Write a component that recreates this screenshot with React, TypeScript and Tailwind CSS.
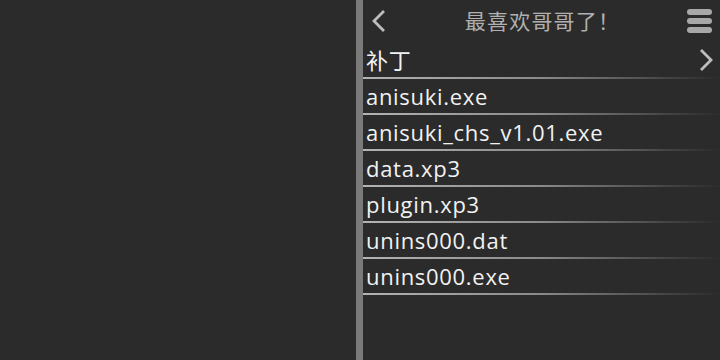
const files = [
  "anisuki.exe",
  "anisuki_chs_v1.01.exe",
  "data.xp3",
  "plugin.xp3",
  "unins000.dat",
  "unins000.exe",
];

const font = { fontFamily: '"Open Sans", "Noto Sans CJK SC", sans-serif' };

function Divider() {
  return <div className="h-[2px] bg-gradient-to-r from-[#b4b4b4] via-[#8a8a8a] to-[#2b2b2b]" />;
}

function Row({ label, arrow }: { label: string; arrow?: boolean }) {
  return (
    <div>
      <div className="flex h-[34px] items-center justify-between pl-[3px] pr-[5px] text-[22px] leading-none tracking-[0.7px] text-[#f2f2f2]">
        <span>{label}</span>
        {arrow && (
          <svg width="16" height="24" viewBox="0 0 16 24" fill="none" aria-hidden="true">
            <path d="M3 3l9 9-9 9" stroke="#bdbdbd" strokeWidth="2.8" strokeLinecap="square" />
          </svg>
        )}
      </div>
      <Divider />
    </div>
  );
}

export default function App() {
  return (
    <div className="flex h-[360px] w-[720px] bg-[#2b2b2b]" style={font}>
      {/* empty left pane */}
      <div className="w-[356px] shrink-0" />
      <div className="w-[7px] shrink-0 bg-[#7a7a7a]" />

      {/* file list pane */}
      <div className="flex min-w-0 flex-1 flex-col">
        <div className="flex h-[43px] items-center justify-between pl-[7px] pr-[8px] pb-[2px]">
          <svg width="16" height="24" viewBox="0 0 16 24" fill="none" aria-hidden="true">
            <path d="M13 3L4 12l9 9" stroke="#bdbdbd" strokeWidth="2.8" strokeLinecap="square" />
          </svg>
          <span
            className="pl-[12px] text-[21px] leading-none tracking-[1.2px] text-[#b0b0b0]"
            style={{ fontFamily: '"Noto Sans CJK SC", sans-serif' }}
          >
            最喜欢哥哥了！
          </span>
          <div className="flex w-[25px] flex-col gap-[3px]">
            <div className="h-[6px] rounded-[3px] bg-[#a8a8a8]" />
            <div className="h-[6px] rounded-[3px] bg-[#a8a8a8]" />
            <div className="h-[6px] rounded-[3px] bg-[#a8a8a8]" />
          </div>
        </div>
        <Row label="补丁" arrow />
        {files.map((f) => (
          <Row key={f} label={f} />
        ))}
      </div>
    </div>
  );
}
